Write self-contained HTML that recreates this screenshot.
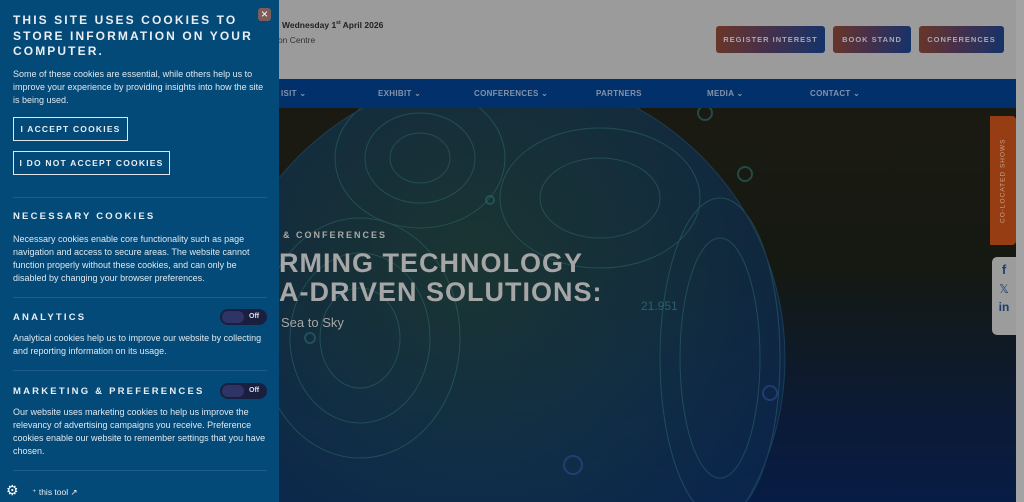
<!DOCTYPE html>
<html><head><meta charset="utf-8"><style>
*{margin:0;padding:0;box-sizing:border-box}
body{width:1024px;height:502px;overflow:hidden;position:relative;font-family:"Liberation Sans",sans-serif;background:#0b1a30}
.hdr{position:absolute;left:0;top:0;width:1016px;height:79px;background:#9b9b9b}
.strip{position:absolute;right:0;top:0;width:8px;height:502px;background:#a3a3a3}
.nav{position:absolute;left:0;top:79px;width:1016px;height:29px;background:#02306a;color:#8293ab;font-size:8px;font-weight:bold;letter-spacing:.3px}
.nav span{position:absolute;top:10px}
.hero{position:absolute;left:0;top:108px;width:1016px;height:394px;background:linear-gradient(#1b1a12 0%,#151912 40%,#0c1a33 75%,#071c45 100%);overflow:hidden}
.btn{position:absolute;top:26px;height:27px;border-radius:3px;background:linear-gradient(100deg,#6a3626 0%,#47304a 45%,#13336a 100%);color:#a9a9b4;font-size:7.5px;letter-spacing:1px;display:flex;align-items:center;justify-content:center;font-weight:bold}
.panel{position:absolute;left:0;top:0;width:279px;height:502px;background:#044a78;color:#e8eef4;overflow:hidden}
.panel h1{position:absolute;left:13px;top:13px;font-size:12px;letter-spacing:2.1px;line-height:15.5px;font-weight:bold;width:262px}
.p{position:absolute;left:13px;font-size:9px;line-height:13px;color:#dfe8f0;width:258px}
.h{position:absolute;left:13px;font-size:9.5px;letter-spacing:2.2px;font-weight:bold}
.b{position:absolute;left:13px;height:24px;border:1.5px solid #dfe6ee;font-size:8.5px;letter-spacing:1.2px;font-weight:bold;display:flex;align-items:center;justify-content:center}
.hr{position:absolute;left:13px;width:254px;height:1px;background:#1d5d88}
.tg{position:absolute;left:220px;width:47px;height:16px;border-radius:8px;background:#1a1f40}
.tg i{position:absolute;left:2px;top:2px;width:22px;height:12px;border-radius:6px;background:#2e3566}
.tg b{position:absolute;left:29px;top:4px;font-size:7px;line-height:8px;color:#dde}
</style></head><body>
<div class="hdr">
<div style="position:absolute;left:282px;top:20px;font-size:8.5px;font-weight:bold;color:#222">Wednesday 1<sup style="font-size:5px">st</sup> April 2026</div>
<div style="position:absolute;left:276px;top:35px;font-size:8.5px;color:#333">ion Centre</div>
<div class="btn" style="left:716px;width:109px">REGISTER INTEREST</div>
<div class="btn" style="left:833px;width:78px">BOOK STAND</div>
<div class="btn" style="left:919px;width:85px">CONFERENCES</div>
</div>
<div class="nav"><span style="left:281px">ISIT ⌄</span><span style="left:378px">EXHIBIT ⌄</span><span style="left:474px">CONFERENCES ⌄</span><span style="left:596px">PARTNERS</span><span style="left:707px">MEDIA ⌄</span><span style="left:810px">CONTACT ⌄</span></div>
<div class="hero">
<svg width="1016" height="394" style="position:absolute;left:0;top:0">
<defs><radialGradient id="g" cx="45%" cy="35%" r="60%"><stop offset="0" stop-color="#1d3e3c"/><stop offset=".6" stop-color="#12334a"/><stop offset="1" stop-color="#0c284e"/></radialGradient></defs>
<circle cx="500" cy="250" r="285" fill="url(#g)" opacity=".75"/>
<g fill="none" stroke="#2f6f6c" stroke-width="1" opacity=".5">
<ellipse cx="420" cy="50" rx="30" ry="25"/><ellipse cx="420" cy="50" rx="55" ry="45"/><ellipse cx="420" cy="50" rx="85" ry="70"/>
<ellipse cx="360" cy="230" rx="40" ry="50"/><ellipse cx="360" cy="230" rx="70" ry="85"/><ellipse cx="360" cy="230" rx="100" ry="120"/>
<ellipse cx="600" cy="90" rx="60" ry="40"/><ellipse cx="600" cy="90" rx="100" ry="70"/>
<ellipse cx="720" cy="250" rx="40" ry="120"/><ellipse cx="720" cy="250" rx="60" ry="160"/>
<circle cx="500" cy="250" r="285" stroke="#24587a"/>
</g>
<g fill="none" stroke="#2a6a6a" stroke-width="2" opacity=".6">
<circle cx="705" cy="5" r="7"/><circle cx="745" cy="66" r="7"/><circle cx="490" cy="92" r="4"/><circle cx="770" cy="285" r="7" stroke="#2d4d90"/><circle cx="573" cy="357" r="9" stroke="#2d4d90"/><circle cx="310" cy="230" r="5"/>
</g>
<text x="641" y="202" fill="#2b5f66" font-size="12" font-family="Liberation Sans">21.951</text>
</svg>
<div style="position:absolute;left:283px;top:122px;font-size:9px;letter-spacing:2px;font-weight:bold;color:#a9a9a9">&amp; CONFERENCES</div>
<div style="position:absolute;left:279px;top:141px;font-size:27px;line-height:29px;font-weight:bold;letter-spacing:1px;color:#a6a6a6">RMING TECHNOLOGY<br>A-DRIVEN SOLUTIONS:</div>
<div style="position:absolute;left:281px;top:207px;font-size:13px;color:#a6a6a6">Sea to Sky</div>
<div style="position:absolute;left:990px;top:8px;width:26px;height:129px;background:#963d14;border-radius:4px 0 0 4px;color:#c9a38a;font-size:6.5px;letter-spacing:1px;writing-mode:vertical-rl;transform:rotate(180deg);display:flex;align-items:center;justify-content:center">CO-LOCATED SHOWS</div>
<div style="position:absolute;left:992px;top:149px;width:24px;height:78px;background:#9c9c9c;border-radius:5px 0 0 5px;color:#1d3f70;font-weight:bold;text-align:center">
<div style="font-size:13px;margin-top:5px">f</div><div style="font-size:12px;margin-top:5px;font-weight:normal">𝕏</div><div style="font-size:12px;margin-top:4px">in</div></div>
</div>
<div class="strip"></div>
<div class="panel">
<div style="position:absolute;left:258px;top:8px;width:13px;height:13px;border-radius:3px;background:#7d5c5c;color:#fff;font-size:12px;line-height:13px;text-align:center">×</div>
<h1>THIS SITE USES COOKIES TO<br>STORE INFORMATION ON YOUR<br>COMPUTER.</h1>
<div class="p" style="top:68px">Some of these cookies are essential, while others help us to improve your experience by providing insights into how the site is being used.</div>
<div class="b" style="top:117px;width:115px">I ACCEPT COOKIES</div>
<div class="b" style="top:151px;width:157px">I DO NOT ACCEPT COOKIES</div>
<div class="hr" style="top:197px"></div>
<div class="h" style="top:211px">NECESSARY COOKIES</div>
<div class="p" style="top:233px">Necessary cookies enable core functionality such as page navigation and access to secure areas. The website cannot function properly without these cookies, and can only be disabled by changing your browser preferences.</div>
<div class="hr" style="top:297px"></div>
<div class="h" style="top:312px">ANALYTICS</div>
<div class="tg" style="top:309px"><i></i><b>Off</b></div>
<div class="p" style="top:332px">Analytical cookies help us to improve our website by collecting and reporting information on its usage.</div>
<div class="hr" style="top:370px"></div>
<div class="h" style="top:386px">MARKETING &amp; PREFERENCES</div>
<div class="tg" style="top:383px"><i></i><b>Off</b></div>
<div class="p" style="top:406px">Our website uses marketing cookies to help us improve the relevancy of advertising campaigns you receive. Preference cookies enable our website to remember settings that you have chosen.</div>
<div class="hr" style="top:470px"></div>
<div style="position:absolute;left:6px;top:482px;font-size:14px;color:#fff">⚙</div>
<div style="position:absolute;left:32px;top:487px;font-size:8.5px;color:#e8eef4">⁺ this tool ↗</div>
</div>
</body></html>
